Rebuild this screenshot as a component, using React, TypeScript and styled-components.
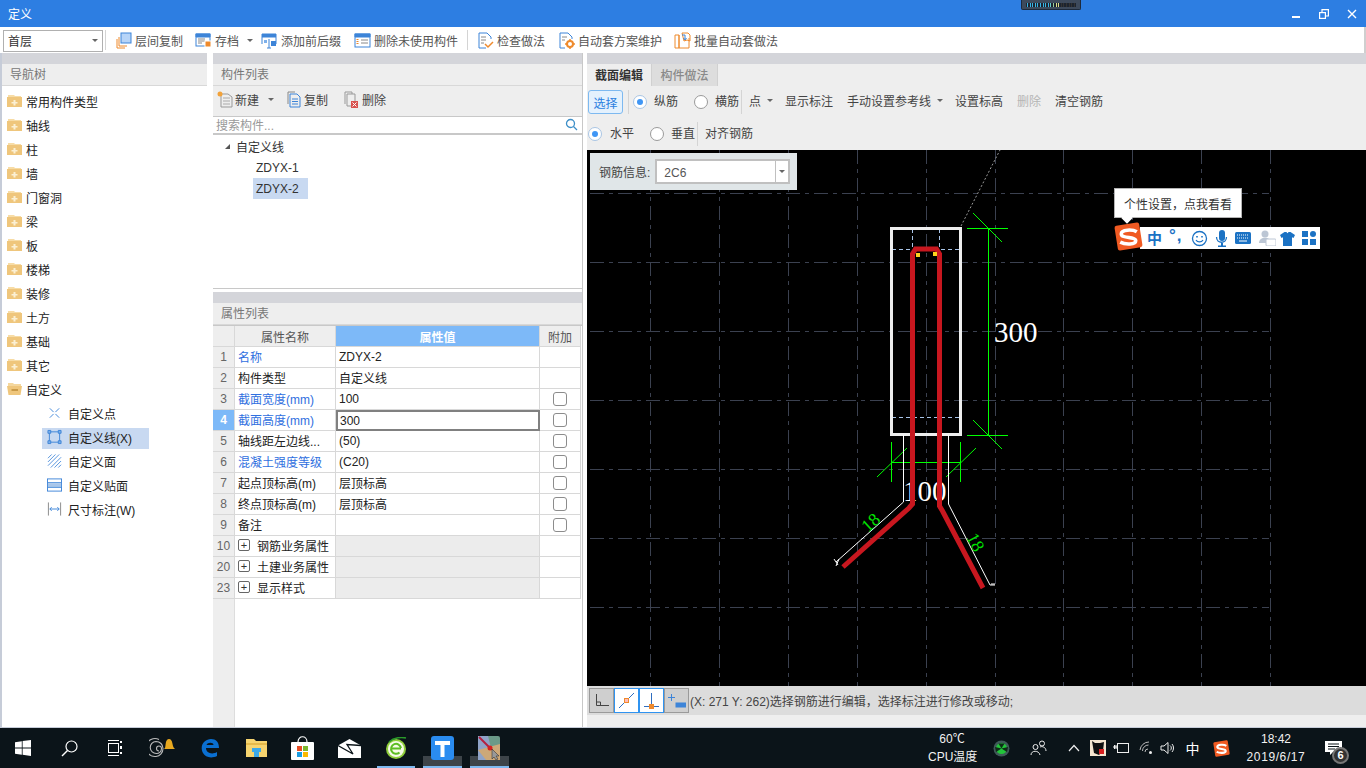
import React from "react";
import styled, { createGlobalStyle } from "styled-components";

const Global = createGlobalStyle`
  html, body { margin: 0; padding: 0; background: #fff; }
  #root { width: 1366px; height: 768px; overflow: hidden; }
  * { box-sizing: border-box; }
`;

const FONT = `"Liberation Sans", "Noto Sans CJK SC", sans-serif`;

const Page = styled.div`
  width: 1366px; height: 768px; display: flex; flex-direction: column; position: relative;
  font-family: ${FONT}; font-size: 12px; color: #333; overflow: hidden;
`;
const TitleBar = styled.div`
  height: 27px; background: #2d7ee2; color: #fff; display: flex; align-items: center;
  padding-left: 8px; font-size: 12px; flex: none;
`;
const TitleText = styled.span` flex: 1; `;
const WinBtn = styled.span` width: 28px; height: 27px; display: flex; align-items: center; justify-content: center; `;
const WinBtns = styled.div` display: flex; `;
const Meter = styled.div`
  position: absolute; left: 1021px; top: 0; width: 60px; height: 10px; background: #3d4a5c;
  border: 1px solid #1d2a3c; border-top: none; border-radius: 0 0 2px 2px; display: flex; align-items: center; padding: 0 4px;
`;
const MeterInner = styled.div` flex: 1; height: 4px; background: #1c2430; display: flex; padding-left: 1px; `;
const MeterCell = styled.i<{ $c: string }>` width: 1px; height: 4px; background: ${p => p.$c}; margin-right: 1.6px; `;

const TopBar = styled.div`
  height: 26px; background: #fff; display: flex; align-items: center; padding-left: 3px; flex: none; color: #555;
  border-right: 2px solid #cfcfcf;
`;
const FloorSelect = styled.div`
  width: 100px; height: 22px; border: 1px solid #b0b0b0; display: flex; align-items: center; justify-content: space-between;
  padding: 0 4px 0 4px; color: #333; margin-top: 1px;
`;
const Caret = styled.i<{ $c?: string }>`
  width: 0; height: 0; border-left: 3px solid transparent; border-right: 3px solid transparent;
  border-top: 3px solid ${p => p.$c || "#666"}; display: inline-block; flex: none;
`;
const VSep = styled.i<{ $h?: number; $m?: string }>`
  width: 1px; height: ${p => p.$h || 20}px; background: #d4d4d4; margin: ${p => p.$m || "0"}; flex: none; display: block;
`;
const ToolItem = styled.div<{ $w: number }>`
  width: ${p => p.$w}px; display: flex; align-items: center; gap: 3px; white-space: nowrap; flex: none;
`;

const Main = styled.div` flex: 1; display: flex; background: #fff; min-height: 0; border-left: 2px solid #c6ccd8; `;
const Panel = styled.div<{ $w?: number }>`
  ${p => (p.$w ? `width:${p.$w}px;flex:none;` : "flex:1;min-width:0;")}
  display: flex; flex-direction: column;
`;
const Strip = styled.div` height: 11px; background: #d4d5da; flex: none; `;
const PanelHead = styled.div`
  height: 22px; background: #eeeeee; border-bottom: 1px solid #d8d8d8; color: #777; padding: 0 8px 2px; display: flex; align-items: center; flex: none;
`;
const Gutter = styled.div<{ $w: number }>` width: ${p => p.$w}px; flex: none; background: #fff; `;

const Tree = styled.div` flex: 1; background: #fff; padding-top: 3px; `;
const NavRow = styled.div`
  height: 24px; display: flex; align-items: center; gap: 4px; padding-left: 5px; color: #222;
`;
const SubRow = styled.div<{ $sel?: boolean }>`
  height: 24px; display: flex; align-items: center; margin-left: 40px; width: 107px; padding-left: 5px; gap: 6px; color: #222;
  position: relative;
  background: ${p => (p.$sel ? "linear-gradient(#fff 0 3px,#c8d9f1 3px 24px)" : "transparent")};
`;

const Mid = styled(Panel)` border-right: 1px solid #c8c8c8; `;
const MidTop = styled.div` display: flex; flex-direction: column; height: 236px; flex: none; `;
const MidBar = styled.div`
  height: 30px; background: #eeeeee; display: flex; align-items: center; padding: 0 0 3px 4px; color: #555; flex: none;
`;
const Search = styled.div`
  height: 19px; border-top: 1px solid #c8c8c8; border-bottom: 2px solid #c8c8c8; background: #fff; display: flex; align-items: center;
  justify-content: space-between; padding: 0 4px 1px 3px; color: #999; flex: none;
`;
const ListArea = styled.div` flex: 1; padding-top: 1px; color: #333; border-bottom: 1px solid #c8c8c8; `;
const ListRow = styled.div<{ $indent: number }>`
  height: 21px; display: flex; align-items: center; padding-left: ${p => p.$indent}px; gap: 6px;
`;
const ListSel = styled.span<{ $sel?: boolean }>`
  width: 55px; padding: 0 3px; height: 21px; display: inline-flex; align-items: center;
  background: ${p => (p.$sel ? "#c8d9f1" : "transparent")};
`;
const Triangle = styled.i`
  width: 0; height: 0; border-left: 5px solid transparent; border-bottom: 5px solid #555; display: block;
`;
const MidGap = styled.div` height: 3px; flex: none; background: #fff; `;

const TableWrap = styled.div`
  flex: 1; background: #fff; position: relative; display: flex; flex-direction: column; border-top: 1px solid #c8c8c8;
`;
const Grid = styled.div`
  display: grid; grid-template-columns: 22px 101px 204px 41px; grid-auto-rows: 21px; width: 368px; background: #fff;
`;
const Filler = styled.div` flex: 1; width: 22px; background: #eeeeee; border-right: 1px solid #ddd; `;
const Cell = styled.div<{ $bg?: string; $c?: string; $center?: boolean; $bold?: boolean; $up?: boolean }>`
  border-right: 1px solid #d8d8d8; border-bottom: 1px solid #d8d8d8; display: flex; align-items: center;
  padding: 0 3px ${p => (p.$up ? 2 : 0)}px; white-space: nowrap; overflow: hidden;
  background: ${p => p.$bg || "#fff"}; color: ${p => p.$c || "#222"};
  ${p => (p.$center ? "justify-content:center;padding:0;" : "")}
  ${p => (p.$bold ? "font-weight:700;" : "")}
`;
const EditCell = styled(Cell)` border: 2px solid #808080; padding: 0 2px; `;
const Check = styled.i` width: 14px; height: 14px; border: 1px solid #8c8c8c; border-radius: 3px; display: block; background: #fff; `;
const Plus = styled.i`
  width: 12px; height: 12px; border: 1px solid #666; border-radius: 2px; margin: 0 7px 0 0; display: flex; align-items: center;
  justify-content: center; font-style: normal; font-size: 11px; line-height: 1; color: #333; flex: none;
`;

const TabRow = styled.div` height: 22px; background: #eeeeee; display: flex; flex: none; `;
const Tab = styled.div<{ $on?: boolean }>`
  height: 22px; width: ${p => (p.$on ? 65 : 66)}px; display: flex; align-items: center; justify-content: center; padding-bottom: 2px;
  background: ${p => (p.$on ? "#eeeeee" : "#dddddd")}; color: ${p => (p.$on ? "#333" : "#8a8a8a")};
  font-weight: ${p => (p.$on ? 700 : 500)}; border-right: 1px solid #d0d0d0;
`;
const EditRow = styled.div<{ $h: number }>`
  height: ${p => p.$h}px; background: #eeeeee; display: flex; align-items: center; flex: none; color: #444; padding: 0 0 3px 1px; white-space: nowrap;
`;
const SelectBtn = styled.div`
  width: 35px; height: 24px; border: 1px solid #7db9f0; border-radius: 3px; background: #e4f1fd; color: #2a7fe0;
  display: flex; align-items: center; justify-content: center; flex: none; margin-top: 3px;
`;
const Radio = styled.i<{ $on?: boolean; $ml?: number }>`
  width: 14px; height: 14px; border-radius: 50%; background: #fff; border: 1px solid ${p => (p.$on ? "#a9c5e4" : "#9a9a9a")};
  display: flex; align-items: center; justify-content: center; flex: none; margin: 2px 0 0 ${p => p.$ml ?? 0}px;
  &::after { content: ""; width: 6px; height: 6px; border-radius: 50%; background: ${p => (p.$on ? "#3f96f5" : "transparent")}; }
`;
const Act = styled.span<{ $m?: number; $dim?: boolean }>`
  margin-left: ${p => p.$m ?? 0}px; color: ${p => (p.$dim ? "#b5b5b5" : "#444")}; flex: none;
`;

const Canvas = styled.div` flex: 1; position: relative; background: #000; min-height: 0; `;
const CanvasSvg = styled.svg` display: block; width: 100%; height: 100%; `;
const InfoBox = styled.div`
  position: absolute; left: 3px; top: 3px; width: 207px; height: 37px; background: #e0e6e8; display: flex; align-items: center;
  padding-left: 9px; gap: 5px; color: #444;
`;
const InfoSelect = styled.div`
  width: 135px; height: 25px; background: #fff; border: 2px solid #c0c0c0; display: flex; align-items: center; padding: 2px 0 0 7px; color: #555; position: relative;
`;
const InfoDrop = styled.span`
  position: absolute; right: 0; top: 0; bottom: 0; width: 13px; border-left: 1px solid #c0c0c0; display: flex; align-items: center; justify-content: center;
`;
const ImeTip = styled.div`
  position: absolute; left: 527px; top: 38px; width: 128px; height: 30px; background: #fff; border: 1px solid #b4b4b4;
  display: flex; align-items: center; justify-content: center; color: #333;
  &::after { content: ""; position: absolute; left: 8px; bottom: -5px; width: 8px; height: 8px; background: #fff; transform: rotate(45deg); }
`;
const ImeBar = styled.div`
  position: absolute; left: 553px; top: 77px; width: 180px; height: 22px; background: #fff; display: flex; align-items: center; color: #1b72c4;
`;
const ImeLogo = styled.div` position: absolute; left: 527px; top: 72px; width: 29px; height: 29px; `;
const ImeZh = styled.span` font-size: 15px; font-weight: 700; margin-left: 7px; width: 15px; line-height: 1; `;
const ImeDot = styled.span` font-size: 17px; font-weight: 700; margin-left: 7px; width: 14px; line-height: 1; letter-spacing: 1px; margin-top: -5px; `;
const ImeIcon = styled.span<{ $m: number }>` margin-left: ${p => p.$m}px; display: flex; `;

const StatusBar = styled.div`
  height: 29px; background: #dcdcdc; display: flex; align-items: center; padding-left: 2px; color: #444; flex: none; white-space: nowrap;
`;
const SnapBtn = styled.div<{ $on?: boolean }>`
  width: 25px; height: 25px; flex: none; display: flex; align-items: center; justify-content: center;
  border: 1px solid ${p => (p.$on ? "#2f93f0" : "#9a9a9a")}; background: ${p => (p.$on ? "#fff" : "#cfcfcf")};
`;
const StatusFoot = styled.div` height: 12px; background: #eeeeee; flex: none; `;

const Taskbar = styled.div`
  height: 41px; background: #0b1419; border-top: 1px solid #c6ccd8; display: flex; align-items: center; color: #fff; flex: none; position: relative;
`;
const TaskSlot = styled.div<{ $line?: boolean; $active?: boolean }>`
  width: ${p => (p.$line ? 38.6 : 46.6)}px; margin: 0 ${p => (p.$line ? 4 : 0)}px;
  height: 40px; display: flex; align-items: center; justify-content: center; flex: none; position: relative;
  ${p => (p.$line ? "border-bottom: 2px solid #7db9f0; padding-top: 2px;" : "")}
  ${p => (p.$active ? "background: linear-gradient(#0b1419 0 28px, #3d4449 28px);" : "")}
`;
const Spacer = styled.div` flex: 1; `;
const TrayText = styled.div<{ $w: number }>`
  width: ${p => p.$w}px; flex: none; text-align: center; line-height: 18px; font-size: 12px; color: #f2f2f2; white-space: nowrap;
`;
const DateText = styled.span` letter-spacing: .6px; `;
const TraySlot = styled.div<{ $w: number }>`
  width: ${p => p.$w}px; flex: none; display: flex; align-items: center; justify-content: center; font-size: 14px; position: relative;
`;
const NotifSlot = styled(TraySlot)` height: 40px; padding-right: 16px; `;
const NotifBadge = styled.span`
  position: absolute; left: 16px; top: 19px; width: 17px; height: 17px; border-radius: 50%; background: #333; border: 2px solid #777;
  color: #fff; font-size: 11px; font-weight: 700; display: flex; align-items: center; justify-content: center; line-height: 1;
`;

/* ---------- icons ---------- */
const Folder = () => (
  <svg width="15" height="14" viewBox="0 0 15 14">
    <path d="M1 1h6l1 1h6v2H1z" fill="#f7dca6" />
    <path d="M0 3h15v10H0z" fill="#efc67c" />
    <path d="M6.500 6h2v2h2v1.600h-2v2h-2v-2h-2V8h2z" fill="#fbf0d4" />
  </svg>
);
const FolderOpen = () => (
  <svg width="15" height="14" viewBox="0 0 15 14">
    <path d="M1 1h5l1 1h7v3H1z" fill="#f4d79e" />
    <path d="M0 4h15l-1.500 9H1.500z" fill="#efc67c" />
    <path d="M4.500 7h6.500v2H4.500z" fill="#c99a48" />
  </svg>
);
const B = "#3d84d8";
const SubIcon = ({ k }: { k: string }) => (
  <svg width="15" height="16" viewBox="0 0 16 16" fill="none" stroke={B} strokeWidth="1">
    {k === "pt" && <><path d="M3 3l4 4M13 3L9 7M3 13l4-4M13 13L9 9" /></>}
    {k === "line" && <><rect x="2.500" y="2.500" width="11" height="11" /><path d="M1 1h3v3H1zM12 1h3v3h-3zM1 12h3v3H1zM12 12h3v3h-3z" fill="#7db0ea" /></>}
    {k === "face" && <path d="M1 5l4-4M1 9l8-8M1 13L13 1M4 15L15 4M8 15l7-7M12 15l3-3" strokeWidth=".9" />}
    {k === "stick" && <><rect x=".5" y="1.500" width="15" height="13" /><path d="M1 5.500h14" /><rect x="1" y="6" width="14" height="4" fill="#a8c6ea" stroke="none" /><path d="M1 10.500h14" /></>}
    {k === "dim" && <><path d="M1.500 1v14" stroke="#888" /><path d="M14.500 1v14" stroke="#888" /><path d="M3 8h10M5 6L3 8l2 2M11 6l2 2-2 2" /></>}
  </svg>
);
const O = "#ee8a2d";
const TI = ({ k }: { k: string }) => (
  <svg width="17" height="17" viewBox="0 0 17 17" fill="none" stroke={B} strokeWidth="1" style={{ flex: "none" }}>
    {k === "copy" && <><rect x="6" y="1" width="10" height="10" fill="#b6d4f8" /><path d="M4 5v9h8M2 7v9h8" stroke={O} /></>}
    {k === "save" && <><rect x="1" y="2" width="14" height="12" /><path d="M1 2h14v3H1z" fill={B} /><path d="M3 7h7M3 9h7M3 11h4" stroke="#888" /><rect x="10" y="9" width="6" height="6" fill={O} stroke="#fff" /></>}
    {k === "fix" && <><path d="M1 2h14v3H1z" fill={B} /><path d="M1 5v7M15 5v7" /><path d="M8 7v9M6 16h4" /><rect x="3" y="8" width="3" height="3" fill="#7db0ea" stroke="none" /><rect x="10" y="9" width="5" height="5" fill={B} stroke="none" /></>}
    {k === "del" && <><rect x="1" y="2" width="15" height="13" /><path d="M1 2h15v3H1z" fill={B} /><path d="M3.500 7v6" stroke={O} strokeDasharray="1 1" strokeWidth="2" /><path d="M7 8h7M7 11h7" stroke="#888" /></>}
    {k === "check" && <><path d="M2 1h8l4 4v2M2 1v15h7" /><path d="M4 5h5M4 8h5M4 11h3" stroke="#888" /><path d="M8 12l3 3 5-5" stroke={O} strokeWidth="1.500" /></>}
    {k === "gear" && <><path d="M2 1h8l4 4v2M2 1v15h5" /><path d="M4 5h5M4 8h3" stroke="#888" /><circle cx="12" cy="12" r="3" stroke={O} strokeWidth="2" /><path d="M12 7v2M12 15v2M7 12h2M15 12h2" stroke={O} strokeWidth="1.500" /></>}
    {k === "batch" && <><path d="M1 3h4v13H1zM5 3v13h10V6" stroke={O} /><path d="M8 1h6l2 2v6l-3-1-3 1z" stroke={O} /><path d="M8 3h3v4M9.500 6l1.500 2 1.500-2" stroke={B} /></>}
    {k === "new" && <><path d="M4 3h7l4 3v10H4z" stroke="#999" /><path d="M6 7h7M6 10h7M6 13h7" stroke="#aaa" /><circle cx="3" cy="3" r="2.500" fill="#f2a23a" stroke="none" /></>}
    {k === "dup" && <><path d="M5 3h7l3 3v10H5z" /><path d="M3 1v12" stroke="#888" /><path d="M3 1h7" stroke="#888" /><path d="M7 8h6M7 10.500h6M7 13h6" /></>}
    {k === "rm" && <><path d="M3 1h7v2M3 1v12" stroke="#999" /><path d="M5 3h8v8M5 3v12h4" stroke="#999" /><rect x="9" y="10" width="7" height="7" fill="#d9534f" stroke="none" /><path d="M10.500 11.500l4 4M14.500 11.500l-4 4" stroke="#fff" /></>}
  </svg>
);

const leftNav = ["常用构件类型", "轴线", "柱", "墙", "门窗洞", "梁", "板", "楼梯", "装修", "土方", "基础", "其它"];
const subs = [
  { k: "pt", t: "自定义点" },
  { k: "line", t: "自定义线(X)", sel: true },
  { k: "face", t: "自定义面" },
  { k: "stick", t: "自定义贴面" },
  { k: "dim", t: "尺寸标注(W)" },
];
const BLUE = "#2f6fe0";
const rows: { n: string; name: string; val: string; blue?: boolean; chk?: boolean; sel?: boolean }[] = [
  { n: "1", name: "名称", val: "ZDYX-2", blue: true },
  { n: "2", name: "构件类型", val: "自定义线" },
  { n: "3", name: "截面宽度(mm)", val: "100", blue: true, chk: true },
  { n: "4", name: "截面高度(mm)", val: "300", blue: true, chk: true, sel: true },
  { n: "5", name: "轴线距左边线...", val: "(50)", chk: true },
  { n: "6", name: "混凝土强度等级", val: "(C20)", blue: true, chk: true },
  { n: "7", name: "起点顶标高(m)", val: "层顶标高", chk: true },
  { n: "8", name: "终点顶标高(m)", val: "层顶标高", chk: true },
  { n: "9", name: "备注", val: "", chk: true },
];
const groups = [["10", "钢筋业务属性"], ["20", "土建业务属性"], ["23", "显示样式"]];
const isCjk = (s: string) => /[^\x00-\x7f]/.test(s);

const meterColors = ["#39b4e6","#39b4e6","#39b4e6","#39b4e6","#39b4e6","#39b4e6","#39b4e6","#39b4e6","#39b4e6","#6cc","#9c9","#dd8","#dd8","#333","#333","#333","#333","#333","#333"];

const DrawGrid = () => {
  const xs = [650.5, 719.5, 788.5, 857.5, 926.5, 995.5, 1063.5, 1132.5, 1201.5, 1270.5];
  const ys = [193.5, 262.5, 331.5, 400.5, 469.5, 538.5, 607.5];
  return (
    <g stroke="#3b4150" strokeWidth="1" strokeDasharray="14 5 4 5">
      {xs.map(x => <line key={x} x1={x} y1={150} x2={x} y2={686} />)}
      {ys.map(y => <line key={y} x1={590} y1={y} x2={1269} y2={y} />)}
    </g>
  );
};

const Drawing = () => (
  <CanvasSvg viewBox="587 150 779 536">
    <DrawGrid />
    <line x1="961" y1="226" x2="1000" y2="150" stroke="#999" strokeDasharray="2 2" />
    <g stroke="#a8c4e8" strokeDasharray="4 3" fill="none">
      <line x1="892" y1="249.500" x2="960" y2="249.500" />
      <line x1="892" y1="417.500" x2="960" y2="417.500" />
      <line x1="912.500" y1="229" x2="912.500" y2="248" />
      <line x1="939.500" y1="229" x2="939.500" y2="248" />
    </g>
    <rect x="891.500" y="228.500" width="69" height="206" fill="none" stroke="#eeeeee" strokeWidth="3" />
    <g stroke="#00ff00" strokeWidth="1" fill="none">
      <path d="M967 228.500h41M967 435.500h41M988.500 228v207M973 213l29 29M973 420l29 29" />
      <path d="M891.500 442v40M960.500 442v40M891 462.500h70M877 477l30-29M946 477l30-29" />
    </g>
    <g fill="#fff" fontFamily="'Liberation Serif', serif" fontSize="29">
      <text x="994" y="342">300</text>
      <text x="903" y="501">100</text>
    </g>
    <g stroke="#fff" strokeWidth="1" fill="none">
      <path d="M903.500 435v67L836 562" />
      <path d="M948.500 435v69L990 585" />
      <path d="M834 559l4 6M836 566l3-7M990 585h5M991 584h4" />
    </g>
    <text x="0" y="0" fontSize="18" fill="#00e000" fontFamily="'Liberation Serif', serif" transform="translate(868 533) rotate(-42)">18</text>
    <text x="0" y="0" fontSize="18" fill="#00e000" fontFamily="'Liberation Serif', serif" transform="translate(966 537) rotate(62)">18</text>
    <path d="M843 567L909 508l3.500-4V254l3-5h21l3 5v252l3 5L983 588" fill="none" stroke="#c8171f" strokeWidth="5" strokeLinejoin="miter" />
    <rect x="916" y="253" width="4" height="4" fill="#ffd21f" />
    <rect x="933" y="252" width="4" height="4" fill="#ffd21f" />
  </CanvasSvg>
);

const SogouLogo = ({ s }: { s: number }) => (
  <svg width={s} height={s} viewBox="0 0 28 28">
    <rect x="2" y="2" width="24" height="24" rx="2" fill="#f05a22" transform="rotate(-9 14 14)" />
    <path d="M22 9.500C18 7 7 7 7 11.500S21 14 21 18s-10 4-15 1.500" fill="none" stroke="#fff" strokeWidth="3.400" />
  </svg>
);

const Win = () => (
  <svg width="16" height="16" viewBox="0 0 16 16" fill="#fff"><path d="M0 2.200l6.800-1V7.600H0zM7.600 1.100L16 0v7.600H7.600zM0 8.400h6.800v6.400L0 13.800zM7.600 8.400H16V16l-8.400-1.200z" /></svg>
);

export default function App() {
  return (
    <Page>
      <Global />
      <TitleBar>
        <TitleText>定义</TitleText>
        <WinBtns>
          <WinBtn><svg width="10" height="10" viewBox="0 0 10 10"><path d="M1 7h8v2H1z" fill="#fff" /></svg></WinBtn>
          <WinBtn><svg width="10" height="10" viewBox="0 0 10 10" fill="none" stroke="#fff" strokeWidth="1.200"><rect x=".6" y="3.600" width="5.800" height="5.800" /><path d="M3 3V.6h6.400V7H7" /></svg></WinBtn>
          <WinBtn><svg width="10" height="10" viewBox="0 0 10 10" stroke="#fff" strokeWidth="1.400"><path d="M1 1l8 8M9 1L1 9" /></svg></WinBtn>
        </WinBtns>
      </TitleBar>
      <Meter><MeterInner>{meterColors.map((c, i) => <MeterCell key={i} $c={c} />)}</MeterInner></Meter>

      <TopBar>
        <FloorSelect>首层<Caret /></FloorSelect>
        <VSep $m="0 9px 0 2px" />
        <ToolItem $w={80}><TI k="copy" /><span>层间复制</span></ToolItem>
        <ToolItem $w={66}><TI k="save" /><span>存档</span><Caret style={{ marginLeft: 5 }} /></ToolItem>
        <ToolItem $w={93}><TI k="fix" /><span>添加前后缀</span></ToolItem>
        <ToolItem $w={113}><TI k="del" /><span>删除未使用构件</span></ToolItem>
        <VSep $m="0 9px 0 0" />
        <ToolItem $w={81}><TI k="check" /><span>检查做法</span></ToolItem>
        <ToolItem $w={116}><TI k="gear" /><span>自动套方案维护</span></ToolItem>
        <ToolItem $w={110}><TI k="batch" /><span>批量自动套做法</span></ToolItem>
      </TopBar>

      <Main>
        <Panel $w={205}>
          <Strip />
          <PanelHead>导航树</PanelHead>
          <Tree>
            {leftNav.map(t => <NavRow key={t}><Folder /><span>{t}</span></NavRow>)}
            <NavRow><FolderOpen /><span>自定义</span></NavRow>
            {subs.map(s => <SubRow key={s.k} $sel={s.sel}><SubIcon k={s.k} /><span>{s.t}</span></SubRow>)}
          </Tree>
        </Panel>
        <Gutter $w={6} />
        <Mid $w={370}>
          <MidTop>
            <Strip />
            <PanelHead>构件列表</PanelHead>
            <MidBar>
              <TI k="new" /><Act $m={1}>新建</Act><Caret style={{ marginLeft: 9 }} />
              <span style={{ marginLeft: 11, display: "flex" }}><TI k="dup" /></span><Act $m={2}>复制</Act>
              <span style={{ marginLeft: 14, display: "flex" }}><TI k="rm" /></span><Act $m={3}>删除</Act>
            </MidBar>
            <Search>搜索构件...
              <svg width="13" height="13" viewBox="0 0 13 13" fill="none" stroke="#3d8fc8" strokeWidth="1.300"><circle cx="5.500" cy="5.500" r="4" /><path d="M8.500 8.500L12 12" /></svg>
            </Search>
            <ListArea>
              <ListRow $indent={12}><Triangle /><span>自定义线</span></ListRow>
              <ListRow $indent={40}><ListSel>ZDYX-1</ListSel></ListRow>
              <ListRow $indent={40}><ListSel $sel>ZDYX-2</ListSel></ListRow>
            </ListArea>
          </MidTop>
          <MidGap />
          <Strip />
          <PanelHead>属性列表</PanelHead>
          <TableWrap>
            <Grid>
              <Cell $bg="#eeeeee" />
              <Cell $bg="#eeeeee" $c="#555" $center>属性名称</Cell>
              <Cell $bg="#7db9f8" $c="#fff" $center $bold>属性值</Cell>
              <Cell $bg="#eeeeee" $c="#555" $center>附加</Cell>
              {rows.map(r => (
                <React.Fragment key={r.n}>
                  <Cell $bg={r.sel ? "#7db9f8" : "#eeeeee"} $c={r.sel ? "#fff" : "#666"} $center $bold={r.sel}>{r.n}</Cell>
                  <Cell $up $c={r.blue ? BLUE : "#222"}>{r.name}</Cell>
                  {r.sel ? <EditCell>{r.val}</EditCell> : <Cell $up={isCjk(r.val)}>{r.val}</Cell>}
                  <Cell $center>{r.chk && <Check />}</Cell>
                </React.Fragment>
              ))}
              {groups.map(([n, t]) => (
                <React.Fragment key={n}>
                  <Cell $bg="#eeeeee" $c="#666" $center>{n}</Cell>
                  <Cell $up><Plus>+</Plus>{t}</Cell>
                  <Cell $bg="#ececec" />
                  <Cell />
                </React.Fragment>
              ))}
            </Grid>
            <Filler />
          </TableWrap>
        </Mid>
        <Gutter $w={4} />
        <Panel>
          <Strip />
          <TabRow><Tab $on>截面编辑</Tab><Tab>构件做法</Tab></TabRow>
          <EditRow $h={32}>
            <SelectBtn>选择</SelectBtn>
            <VSep $h={24} $m="3px 5px 0 5px" />
            <Radio $on $ml={-1} /><Act $m={7}>纵筋</Act>
            <Radio $ml={16} /><Act $m={7}>横筋</Act>
            <VSep $h={24} $m="3px 0 0 2px" />
            <Act $m={7}>点</Act><Caret style={{ marginLeft: 6 }} />
            <Act $m={12}>显示标注</Act>
            <Act $m={14}>手动设置参考线</Act><Caret style={{ marginLeft: 6 }} />
            <Act $m={12}>设置标高</Act>
            <Act $m={14} $dim>删除</Act>
            <Act $m={14}>清空钢筋</Act>
          </EditRow>
          <EditRow $h={32}>
            <Radio $on /><Act $m={8}>水平</Act>
            <Radio $ml={16} /><Act $m={7}>垂直</Act>
            <VSep $h={24} $m="3px 0 0 2px" />
            <Act $m={7}>对齐钢筋</Act>
          </EditRow>
          <Canvas>
            <Drawing />
            <InfoBox>钢筋信息:
              <InfoSelect>2C6<InfoDrop><Caret /></InfoDrop></InfoSelect>
            </InfoBox>
            <ImeTip>个性设置，点我看看</ImeTip>
            <ImeBar>
              <ImeZh>中</ImeZh>
              <ImeDot>°,</ImeDot>
              <ImeIcon $m={8}><svg width="17" height="17" viewBox="0 0 17 17" fill="none" stroke="#1b72c4" strokeWidth="1.300"><circle cx="8.500" cy="8.500" r="7" /><path d="M5 10c1.500 2.500 5.500 2.500 7 0" /><path d="M6 6v1.500M11 6v1.500" strokeWidth="1.600" /></svg></ImeIcon>
              <ImeIcon $m={7}><svg width="13" height="17" viewBox="0 0 13 17" fill="#1b72c4"><rect x="4" y="0" width="6" height="11" rx="3" /><path d="M1.500 7c0 7 10 7 10 0" fill="none" stroke="#1b72c4" strokeWidth="1.300" /><path d="M6 13h2v3H6zM3 15.500h8v1.500H3z" /></svg></ImeIcon>
              <ImeIcon $m={7}><svg width="16" height="12" viewBox="0 0 16 12"><rect width="16" height="12" rx="1.500" fill="#1b72c4" /><path d="M2 3h12M2 6h12" stroke="#fff" strokeDasharray="1 1" /><path d="M4 9h8" stroke="#fff" /></svg></ImeIcon>
              <ImeIcon $m={8}><svg width="17" height="16" viewBox="0 0 17 16" fill="#bcc6d4"><circle cx="6" cy="4" r="3.500" /><path d="M0 13c0-7 12-7 12 0z" /><rect x="7" y="9" width="10" height="7" rx="1" fill="#fff" stroke="#bcc6d4" /></svg></ImeIcon>
              <ImeIcon $m={4}><svg width="15" height="15" viewBox="0 0 15 15" fill="#1b72c4"><path d="M4.500 1h2c.5 1.500 1.500 1.500 2 0h2l4.500 3-1.500 3-1.500-.8V15H3V6.200l-1.500.8L0 4z" /></svg></ImeIcon>
              <ImeIcon $m={7}><svg width="14" height="14" viewBox="0 0 14 14" fill="#1b72c4"><rect width="6" height="6" /><rect x="8" width="6" height="6" rx="3" /><rect y="8" width="6" height="6" /><rect x="8" y="8" width="6" height="6" /></svg></ImeIcon>
            </ImeBar>
            <ImeLogo><SogouLogo s={29} /></ImeLogo>
          </Canvas>
          <StatusBar>
            <SnapBtn><svg width="16" height="14" viewBox="0 0 16 14" fill="none" stroke="#444"><path d="M2.500 0v11.500H15M2.500 8h4v3.500" /></svg></SnapBtn>
            <SnapBtn $on><svg width="17" height="17" viewBox="0 0 17 17" fill="none" stroke="#2f6ec0"><path d="M1 16L16 1" /><rect x="6.500" y="6.500" width="4" height="4" fill="#fbb" stroke={O} /></svg></SnapBtn>
            <SnapBtn $on><svg width="17" height="17" viewBox="0 0 17 17" fill="none" stroke="#2f6ec0"><path d="M8.500 1v14M1 14.500h15" /><rect x="6.500" y="12.500" width="4" height="4" fill={O} stroke={O} /></svg></SnapBtn>
            <SnapBtn><svg width="18" height="16" viewBox="0 0 18 16" fill="none" stroke="#3d84d8"><path d="M3.500 1v7M0 4.500h7" /><rect x="8" y="10" width="10" height="4" fill="#3d84d8" /></svg></SnapBtn>
            <Act $m={1}>(X: 271 Y: 262)选择钢筋进行编辑，选择标注进行修改或移动;</Act>
          </StatusBar>
          <StatusFoot />
        </Panel>
      </Main>

      <Taskbar>
        <TaskSlot><Win /></TaskSlot>
        <TaskSlot><svg width="17" height="17" viewBox="0 0 17 17" fill="none" stroke="#fff" strokeWidth="1.200"><circle cx="10.500" cy="6.500" r="5.500" /><path d="M6.500 10.500L1 16" strokeWidth="1.500" /></svg></TaskSlot>
        <TaskSlot><svg width="16" height="16" viewBox="0 0 16 16" fill="none" stroke="#fff"><path d="M0 .500h11M0 15.500h11" /><rect x=".5" y="3.500" width="10" height="9" /><path d="M13 1v2M13 6v3M13 12v2" strokeWidth="2" /></svg></TaskSlot>
        <TaskSlot><svg width="28" height="24" viewBox="0 0 28 24" fill="none"><path d="M10 15a2.500 2.500 0 1 1 2.500-2.500 5 5 0 0 1-5 5 6 6 0 0 1-.5-12c4 0 7 3 7 7a8 8 0 0 1-7 8 9 9 0 1 1 3-17" stroke="#bbb" strokeWidth="1.100" /><path d="M16 12c1-2 0-9 4-9s3 7 5 9l1 1H15z" fill="#e8a920" /></svg></TaskSlot>
        <TaskSlot><svg width="20" height="20" viewBox="0 0 20 20" fill="none"><path d="M3 15C-1 7 5 1 11 1c5 0 8 3 8 9H6c0 5 6 7 11 4v4c-6 3-12 1-14-3z" fill="#0a6fd1" /><path d="M6.500 7h7c0-3-6-3-7 0z" fill="#0b1419" /></svg></TaskSlot>
        <TaskSlot><svg width="21" height="18" viewBox="0 0 21 18"><path d="M0 0h8l2 2h11v16H0z" fill="#f6d46f" /><path d="M0 4h21v2H0z" fill="#e5b94a" /><path d="M6 9h9v4h-2v5H8v-5H6z" fill="#3ba8e8" /></svg></TaskSlot>
        <TaskSlot><svg width="23" height="24" viewBox="0 0 23 24"><rect y="6" width="23" height="18" rx="1" fill="#fff" /><path d="M7 6c0-7 9-7 9 0" fill="none" stroke="#fff" strokeWidth="1.200" /><rect x="6" y="10" width="5" height="5" fill="#e74c23" /><rect x="12" y="10" width="5" height="5" fill="#7cb82f" /><rect x="6" y="16" width="5" height="5" fill="#1b9de2" /><rect x="12" y="16" width="5" height="5" fill="#fbb900" /></svg></TaskSlot>
        <TaskSlot><svg width="23" height="19" viewBox="0 0 23 19"><path d="M11.500 0L23 6.500V19H0V6.500z" fill="#fff" /><path d="M0 6.500l15 8.500-6-9.500L23 6.500" fill="none" stroke="#0b1419" strokeWidth="1.300" /></svg></TaskSlot>
        <TaskSlot $line><svg width="21" height="22" viewBox="0 0 21 22"><circle cx="10" cy="12" r="10" fill="#8fce3a" /><circle cx="10" cy="12" r="8" fill="#f6fbe8" /><path d="M5 11.500h10M15 11a5 5 0 1 0-1.500 4.500" fill="none" stroke="#5cbe22" strokeWidth="2" /><path d="M3 5C8 0 16 0 20 1" stroke="#2a9a2a" fill="none" strokeWidth="1.500" /></svg></TaskSlot>
        <TaskSlot $line $active><svg width="23" height="24" viewBox="0 0 23 24"><rect width="23" height="24" rx="3" fill="#2a8cf0" /><path d="M4 5h15v4h-5.500v12h-4V9H4z" fill="#fff" /></svg></TaskSlot>
        <TaskSlot $line $active><svg width="22" height="24" viewBox="0 0 22 24"><rect width="22" height="24" rx="2" fill="#6b9a88" /><path d="M0 0h10l6 24H0z" fill="#8fa3c8" /><path d="M0 14l22-6v16H8z" fill="#cda878" /><path d="M1 1l11 11" stroke="#b52040" strokeWidth="2" /><circle cx="12" cy="12" r="2.500" fill="#d42020" /><path d="M14 13v10l2-2 2 3 2-1-2-3h3z" fill="#999" stroke="#222" strokeWidth=".5" /></svg></TaskSlot>
        <Spacer />
        <TrayText $w={48} style={{ marginRight: 8 }}>60℃<br />CPU温度</TrayText>
        <TraySlot $w={34}><svg width="17" height="17" viewBox="0 0 17 17"><circle cx="8.500" cy="8.500" r="8" fill="#3f5a58" /><circle cx="8.500" cy="8.500" r="5.500" fill="#22c53a" /><path d="M8.500 8.500L5.500 3.500h6zM8.500 8.500L3 12l-1-5zM8.500 8.500l5.500 3.500 1-5z" fill="#0e2a18" /></svg></TraySlot>
        <TraySlot $w={40}><svg width="17" height="16" viewBox="0 0 17 16" fill="none" stroke="#eee"><circle cx="5.500" cy="7" r="2.500" /><path d="M1 15c0-5 8-5 9 0" /><circle cx="12" cy="3.500" r="2.500" /><path d="M10 7c2-1 6 0 6 4" /></svg></TraySlot>
        <TraySlot $w={32}><svg width="12" height="8" viewBox="0 0 12 8" fill="none" stroke="#eee" strokeWidth="1.200"><path d="M1 7l5-5.500L11 7" /></svg></TraySlot>
        <TraySlot $w={16}><svg width="16" height="16" viewBox="0 0 16 16"><rect width="16" height="16" fill="#f5e6d0" /><path d="M2 1l3 2h5l4-1-1 9-4 4-5-2z" fill="#111" /><path d="M9 9h5v5H9z" fill="#d92020" /></svg></TraySlot>
        <TraySlot $w={30}><svg width="16" height="12" viewBox="0 0 16 12" fill="none" stroke="#eee"><rect x="4.500" y="1.500" width="11" height="9" /><path d="M0 5h4M1.500 3v4M3 3v4" /></svg></TraySlot>
        <TraySlot $w={21}><svg width="15" height="14" viewBox="0 0 15 14" fill="none" stroke="#bbb"><path d="M1 9a9 9 0 0 1 9-8M3.500 10a6 6 0 0 1 6-6M6 11a3 3 0 0 1 3-3" /><circle cx="11.500" cy="11.500" r="1.500" fill="#eee" stroke="none" /></svg></TraySlot>
        <TraySlot $w={21}><svg width="15" height="14" viewBox="0 0 15 14" fill="none" stroke="#eee"><path d="M1 5h3l4-3.500v11L4 9H1zM10 4.500a3 3 0 0 1 0 5M12 3a6 6 0 0 1 0 8" /></svg></TraySlot>
        <TraySlot $w={29}>中</TraySlot>
        <TraySlot $w={29}><SogouLogo s={17} /></TraySlot>
        <TrayText $w={80}>18:42<br /><DateText>2019/6/17</DateText></TrayText>
        <NotifSlot $w={50}>
          <svg width="17" height="15" viewBox="0 0 17 15"><path d="M0 0h17v11H8l-3 3v-3H0z" fill="#fff" /><path d="M3 3h11M3 5.500h11M3 8h7" stroke="#0b1419" /></svg>
          <NotifBadge>6</NotifBadge>
        </NotifSlot>
      </Taskbar>
    </Page>
  );
}
